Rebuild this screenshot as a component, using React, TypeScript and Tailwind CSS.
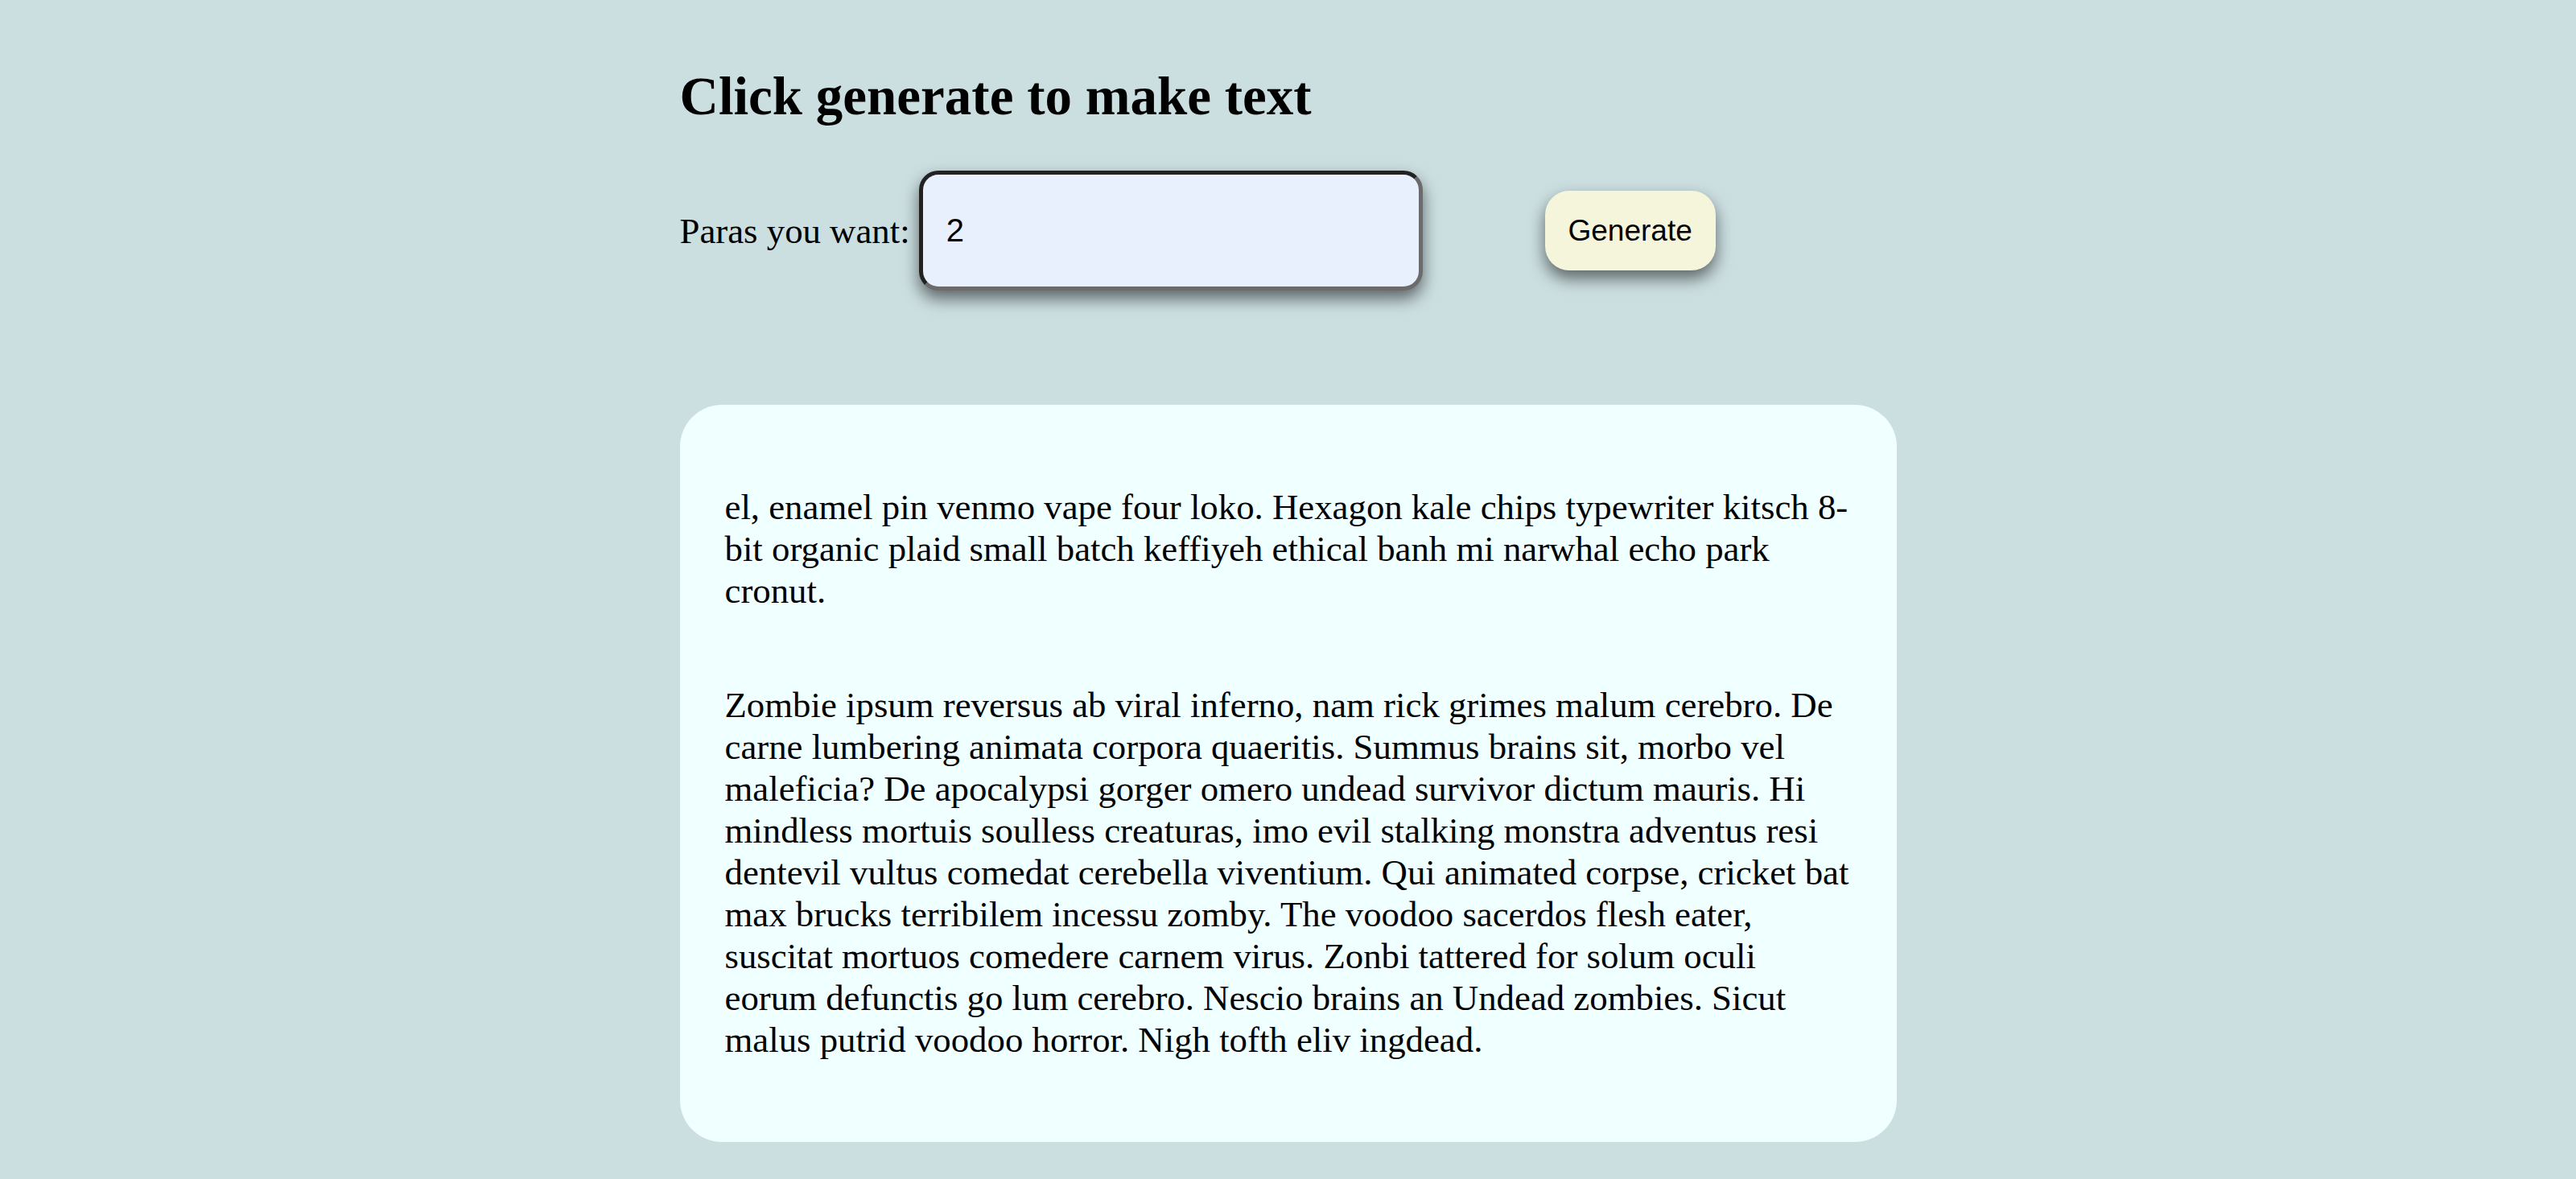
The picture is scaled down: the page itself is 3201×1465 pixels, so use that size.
import React, { useState } from "react";

const hipster =
  "el, enamel pin venmo vape four loko. Hexagon kale chips typewriter kitsch 8-bit organic plaid small batch keffiyeh ethical banh mi narwhal echo park cronut.";

const zombie =
  "Zombie ipsum reversus ab viral inferno, nam rick grimes malum cerebro. De carne lumbering animata corpora quaeritis. Summus brains sit, morbo vel maleficia? De apocalypsi gorger omero undead survivor dictum mauris. Hi mindless mortuis soulless creaturas, imo evil stalking monstra adventus resi dentevil vultus comedat cerebella viventium. Qui animated corpse, cricket bat max brucks terribilem incessu zomby. The voodoo sacerdos flesh eater, suscitat mortuos comedere carnem virus. Zonbi tattered for solum oculi eorum defunctis go lum cerebro. Nescio brains an Undead zombies. Sicut malus putrid voodoo horror. Nigh tofth eliv ingdead.";

export default function App() {
  const [paras, setParas] = useState("2");
  const [text] = useState([hipster, zombie]);

  return (
    <div className="min-h-screen bg-[#cbdee0] font-['Liberation_Serif',serif] text-black">
      <div className="mx-auto w-[1512px] pt-[81px] pb-[47px]">
        <h1 className="text-[67px] font-bold leading-[77px]">
          Click generate to make text
        </h1>

        <form
          className="mt-[54px] flex items-center"
          onSubmit={(e) => e.preventDefault()}
        >
          <label htmlFor="paras" className="text-[44.8px] leading-[52px]">
            Paras you want:
          </label>
          <input
            id="paras"
            type="number"
            value={paras}
            onChange={(e) => setParas(e.target.value)}
            className="ml-[11px] h-[149px] w-[626px] rounded-[24px] border-[5px] border-t-[#222] border-l-[#222] border-b-[#6b6b6b] border-r-[#6b6b6b] bg-[#e8f0fe] pl-[29px] font-['Liberation_Sans',sans-serif] text-[40px] shadow-[0_10px_20px_rgba(0,0,0,0.55)] outline-none [appearance:textfield] [&::-webkit-inner-spin-button]:appearance-none"
          />
          <button
            type="submit"
            className="ml-[152px] h-[99px] w-[212px] rounded-[30px] bg-[#f5f5dc] font-['Liberation_Sans',sans-serif] text-[37px] shadow-[0_10px_20px_rgba(0,0,0,0.55)]"
          >
            Generate
          </button>
        </form>

        <article className="mt-[142px] flex flex-col rounded-[52px] bg-[#f0ffff] px-[56px] py-[56px] text-[44.8px] leading-[52px]">
          {text.map((p, i) => (
            <p key={i} className="my-[45px]">
              {p}
            </p>
          ))}
        </article>
      </div>
    </div>
  );
}
